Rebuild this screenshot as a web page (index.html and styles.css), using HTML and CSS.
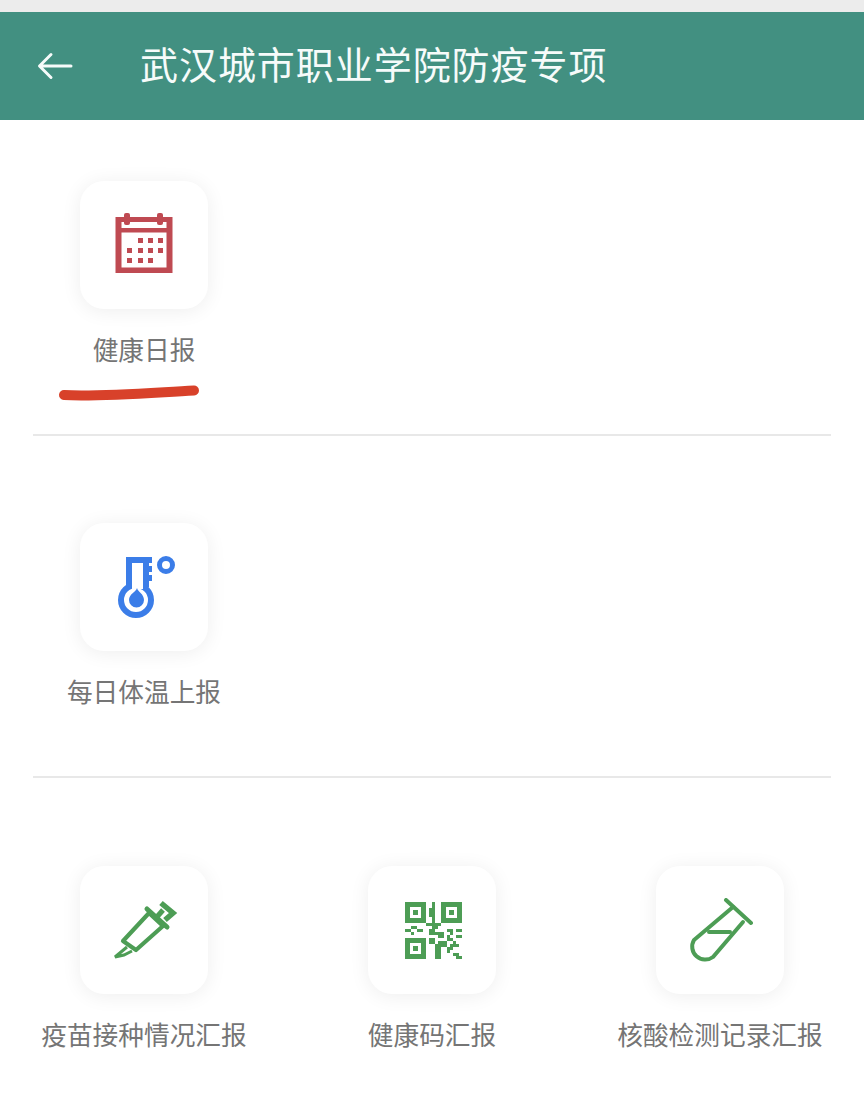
FILE: index.html
```html
<!DOCTYPE html>
<html lang="zh-CN">
<head>
  <meta charset="UTF-8" />
  <meta name="viewport" content="width=device-width, initial-scale=1.0"/>
  <title>武汉城市职业学院防疫专项</title>
  <link rel="stylesheet" href="styles.css">
</head>
<body>

  <div class="status-strip"></div>

  <header class="topbar">
    <svg class="back" viewBox="0 0 36 28" width="36" height="28">
      <path d="M34 14H3M14 2.500L2.500 14L14 25.500" fill="none" stroke="#f6fbfa" stroke-width="3" stroke-linecap="round" stroke-linejoin="round"/>
    </svg>
    <h1>武汉城市职业学院防疫专项</h1>
  </header>

  <section class="group group-first">
    <div class="item">
      <div class="tile">
        <svg viewBox="0 0 128 128" width="128" height="128">
          <g fill="#bf4a52">
            <path fill-rule="evenodd" d="M35.500 36h57v56h-57zM41.500 51.500v35h45v-35zM41.500 41v6h45v-6z"/>
            <rect x="44" y="32" width="6" height="12" rx="2"/>
            <rect x="77" y="32" width="6" height="12" rx="2"/>
            <rect x="58" y="57" width="5" height="5"/>
            <rect x="68" y="57" width="5" height="5"/>
            <rect x="78" y="57" width="5" height="5"/>
            <rect x="47" y="67" width="5" height="5"/>
            <rect x="58" y="67" width="5" height="5"/>
            <rect x="68" y="67" width="5" height="5"/>
            <rect x="78" y="67" width="5" height="5"/>
            <rect x="47" y="77" width="5" height="5"/>
            <rect x="58" y="77" width="5" height="5"/>
            <rect x="68" y="77" width="5" height="5"/>
          </g>
        </svg>
      </div>
      <div class="label">健康日报</div>
    </div>
    <svg class="scrawl" viewBox="0 0 146 20" width="146" height="20">
      <path d="M7 13C40 15 90 11 137 8.500" fill="none" stroke="#d8412a" stroke-width="10" stroke-linecap="round"/>
    </svg>
  </section>

  <section class="group">
    <div class="item">
      <div class="tile">
        <svg viewBox="0 0 128 128" width="128" height="128">
          <circle cx="56" cy="77" r="15" fill="none" stroke="#3b7de8" stroke-width="6"/>
          <rect x="52" y="58" width="11" height="8" fill="#fff"/>
          <path d="M49 63V37H72M66 37V64M66 46H72M66 55H72" fill="none" stroke="#3b7de8" stroke-width="6"/>
          <path d="M57 65c1 4 7 6 7 12a7.500 7.500 0 0 1-15 0c0-6 7-8 8-12z" fill="#3b7de8"/>
          <circle cx="86" cy="42" r="6.500" fill="none" stroke="#3b7de8" stroke-width="5"/>
        </svg>
      </div>
      <div class="label">每日体温上报</div>
    </div>
  </section>

  <section class="group group-last">
    <div class="item">
      <div class="tile">
        <svg viewBox="0 0 128 128" width="128" height="128">
          <g fill="none" stroke="#4d9d55" stroke-width="4.200">
            <path d="M43 75L69 47L83 60L56 84z" stroke-linejoin="round"/>
            <path d="M67 43L87 61" stroke-width="5" stroke-linecap="round"/>
            <path d="M76 52L83 44" stroke-width="5"/>
            <path d="M81 37L93 47L85 54" stroke-width="5.500"/>
            <path d="M47 81L35 91L44 89L52 85" stroke-width="3"/>
          </g>
        </svg>
      </div>
      <div class="label">疫苗接种情况汇报</div>
    </div>

    <div class="item">
      <div class="tile">
        <svg viewBox="0 0 128 128" width="128" height="128">
          <g fill="#4d9d55">
            <path fill-rule="evenodd" d="M37 36h21v21H37zM42 41v11h11V41zM73 36h21v21H73zM78 41v11h11V41zM37 72h21v21H37zM42 77v11h11V77z"/>
            <rect x="45" y="44" width="5" height="5"/>
            <rect x="81" y="44" width="5" height="5"/>
            <rect x="45" y="80" width="5" height="5"/>
            <path d="M64 36h3v6h-3zM61 42h6v9h-6zM64 51h3v6h-3zM58 57h15v3H58zM43 60h6v3h-6zM64 60h6v3h-6zM37 63h6v3h-6zM49 63h6v3h-6zM61 63h6v3h-6zM79 63h6v3h-6zM88 63h6v3h-6zM43 66h3v3h-3zM61 66h15v3H61zM82 66h3v3h-3zM70 69h6v3h-6zM79 69h3v3h-3zM88 69h6v3h-6zM61 72h6v3h-6zM79 72h6v3h-6zM61 75h6v3h-6zM70 75h9v3h-9zM85 75h3v3h-3zM67 78h12v3H67zM82 78h9v3h-9zM67 81h6v3h-6zM79 81h6v3h-6zM67 84h6v3h-6zM79 84h3v3h-3zM67 87h6v3h-6zM85 87h6v3h-6zM67 90h6v3h-6zM88 90h6v3h-6z"/>
          </g>
        </svg>
      </div>
      <div class="label">健康码汇报</div>
    </div>

    <div class="item">
      <div class="tile">
        <svg viewBox="0 0 128 128" width="128" height="128">
          <g fill="none" stroke="#4d9d55" stroke-width="4" stroke-linecap="round">
            <path d="M70 34L95 57"/>
            <path d="M77 41L38 74a13 13 0 0 0 19 17L87 56"/>
            <path d="M53 66H74"/>
          </g>
        </svg>
      </div>
      <div class="label">核酸检测记录汇报</div>
    </div>
  </section>

</body>
</html>
```

FILE: styles.css
```css
body {
  font-family: "Noto Sans CJK SC", "Noto Sans", sans-serif;
  margin: 0;
  background: #fff;
}

.status-strip {
  height: 12px;
  background: #ececec;
}

.topbar {
  height: 108px;
  background: #429081;
  display: flex;
  align-items: center;
  padding-left: 37px;
  box-sizing: border-box;
}

.back {
  flex: none;
}

.topbar h1 {
  margin: 0 0 6px 67px;
  font-size: 38px;
  font-weight: 400;
  letter-spacing: 0.950px;
  line-height: 50px;
  color: #f6fbfa;
}

.group {
  position: relative;
  display: grid;
  grid-template-columns: repeat(3, 288px);
  padding: 87px 0 0;
  height: 342px;
  box-sizing: border-box;
}

.group-first {
  padding-top: 61px;
  height: 316px;
}

.group:not(.group-last)::after {
  content: "";
  position: absolute;
  left: 33px;
  right: 33px;
  bottom: 0;
  border-bottom: 2px solid #e8e8e8;
}

.group-last {
  height: auto;
  padding-top: 88px;
}

.item {
  display: flex;
  flex-direction: column;
  align-items: center;
}

.tile {
  width: 128px;
  height: 128px;
  background: #fff;
  border-radius: 24px;
  box-shadow: 0 2px 20px rgba(0,0,0,0.07);
}

.tile svg {
  display: block;
  filter: blur(0.400px);
}

.label {
  margin-top: 23px;
  font-size: 25.700px;
  line-height: 34px;
  color: #757575;
  white-space: nowrap;
}

.scrawl {
  position: absolute;
  left: 57px;
  top: 262px;
}
```
